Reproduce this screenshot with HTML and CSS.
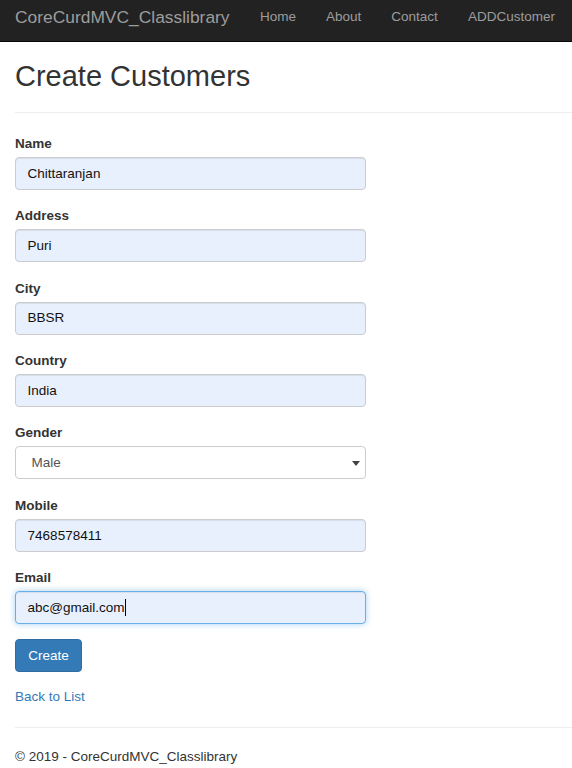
FILE: index.html
```html
<!DOCTYPE html>
<html lang="en">
<head>
<meta charset="utf-8">
<title>Create Customers</title>
<link rel="stylesheet" href="styles.css">
</head>
<body>
<nav class="navbar">
  <a class="brand" href="#">CoreCurdMVC_Classlibrary</a>
  <ul class="nav">
    <li><a href="#">Home</a></li>
    <li><a href="#">About</a></li>
    <li><a href="#">Contact</a></li>
    <li><a href="#">ADDCustomer</a></li>
  </ul>
</nav>
<main class="container">
  <h2 class="title">Create Customers</h2>
  <hr class="rule">
  <form class="form">
    <div class="form-group">
      <label class="label">Name</label>
      <div class="form-control autofill">Chittaranjan</div>
    </div>
    <div class="form-group">
      <label class="label">Address</label>
      <div class="form-control autofill">Puri</div>
    </div>
    <div class="form-group">
      <label class="label">City</label>
      <div class="form-control autofill">BBSR</div>
    </div>
    <div class="form-group">
      <label class="label">Country</label>
      <div class="form-control autofill">India</div>
    </div>
    <div class="form-group">
      <label class="label">Gender</label>
      <div class="form-control select"><span class="select-value">Male</span><svg class="select-arrow" width="8" height="5" viewBox="0 0 8 5"><path d="M0 0H8L4 5Z" fill="#444"/></svg></div>
    </div>
    <div class="form-group">
      <label class="label">Mobile</label>
      <div class="form-control autofill">7468578411</div>
    </div>
    <div class="form-group">
      <label class="label">Email</label>
      <div class="form-control autofill focus">abc@gmail.com<span class="caret"></span></div>
    </div>
    <div class="form-group">
      <button type="button" class="btn">Create</button>
    </div>
  </form>
  <div class="back"><a href="#">Back to List</a></div>
  <hr class="rule footer-rule">
  <footer class="footer">
    <p>&copy; 2019 - CoreCurdMVC_Classlibrary</p>
  </footer>
</main>
</body>
</html>
```

FILE: styles.css
```css
* { box-sizing: border-box; }
html, body { margin: 0; padding: 0; }
body {
  font-family: "Liberation Sans", Arial, Helvetica, sans-serif;
  font-size: 13.5px;
  line-height: 19.3px;
  color: #333;
  background: #fff;
}
a { color: #337ab7; text-decoration: none; }

.navbar {
  display: flex;
  align-items: center;
  height: 42px;
  padding-bottom: 7px;
  background: #222;
  border-bottom: 1px solid #080808;
}
.brand {
  color: #9d9d9d;
  font-size: 17.4px;
  line-height: 20px;
  padding: 0 15.5px 0 15px;
  white-space: nowrap;
}
.nav {
  display: flex;
  list-style: none;
  margin: 0;
  padding: 0;
}
.nav a {
  display: block;
  color: #9d9d9d;
  padding: 0 15px;
  white-space: nowrap;
}

.container { padding: 0 0 0 15px; }
.title {
  margin: 19px 0 0;
  font-size: 29px;
  line-height: 31.9px;
  font-weight: 500;
  color: #333;
}
.rule {
  border: 0;
  border-top: 1px solid #eee;
  margin: 19.4px 0 19.3px;
  height: 0;
}

.form { width: 351px; }
.form-group { margin-bottom: 15.1px; }
.label {
  display: block;
  font-weight: bold;
  padding-top: 1.2px;
  margin-bottom: 3.8px;
}
.form-control {
  height: 33px;
  padding: 5.8px 11.6px;
  border: 1px solid #ccc;
  border-radius: 4px;
  background: #fff;
  color: #555;
  box-shadow: inset 0 1px 1px rgba(0,0,0,.075);
  white-space: nowrap;
}
.autofill { background: #e8f0fe; color: #111; }
.focus {
  border-color: #66afe9;
  box-shadow: inset 0 1px 1px rgba(0,0,0,.075), 0 0 6px rgba(102,175,233,.6);
}
.caret {
  display: inline-block;
  width: 1px;
  height: 17px;
  background: #000;
  vertical-align: -4px;
}
.select {
  display: flex;
  align-items: center;
  justify-content: space-between;
  padding-left: 15.5px;
  padding-right: 5px;
  box-shadow: none;
}
.select-value { color: #555; }
.select-arrow { display: block; margin-top: 1px; }

.btn {
  font-family: inherit;
  font-size: 13.5px;
  line-height: 19.3px;
  height: 33px;
  padding: 5.8px 12.2px;
  color: #fff;
  background: #337ab7;
  border: 1px solid #2e6da4;
  border-radius: 4px;
}
.back { line-height: 19.3px; }
.footer-rule { margin-top: 20px; }
.footer p { margin: 0; }
```
